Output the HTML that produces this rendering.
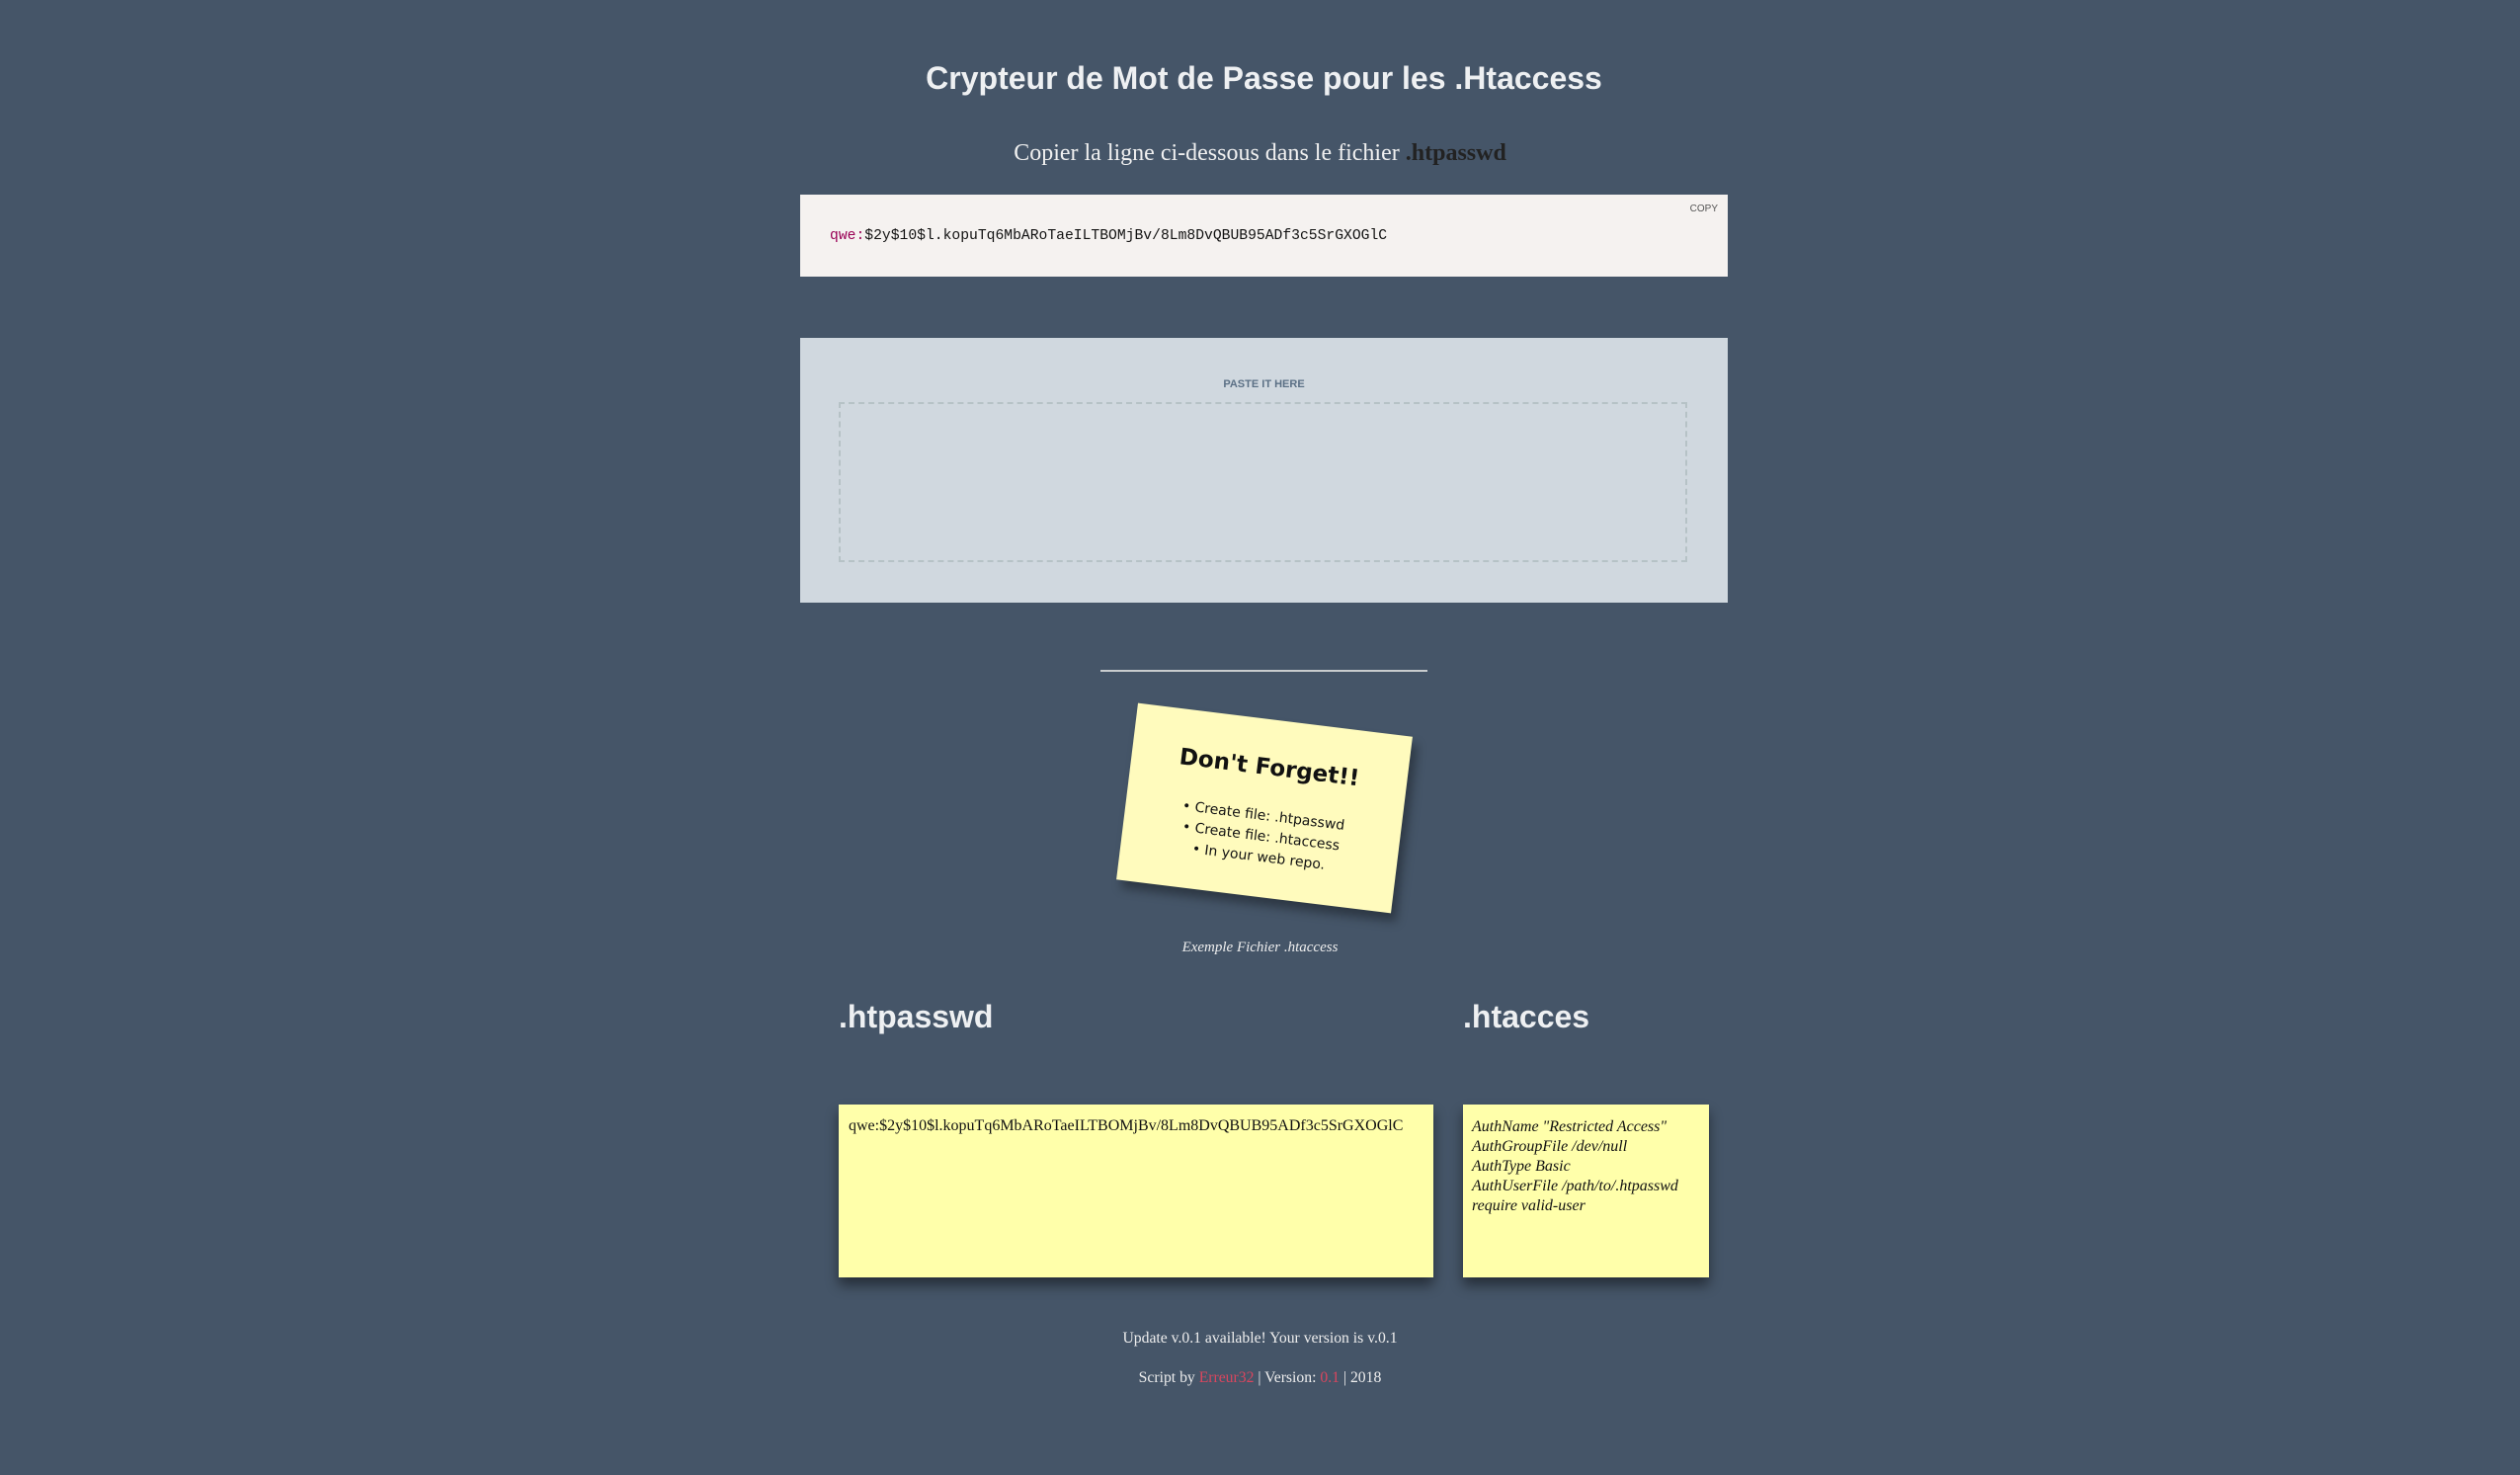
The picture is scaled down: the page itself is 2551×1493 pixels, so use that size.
<!DOCTYPE html>
<html><head><meta charset="utf-8">
<style>
html,body{margin:0;padding:0}
body{width:2551px;height:1493px;background:#455568;position:relative;overflow:hidden;font-family:"Liberation Serif",serif;color:#eee}
.a{position:absolute}
h1{position:absolute;left:0;width:2551px;top:61px;margin:0;text-align:center;font:bold 32px "Liberation Sans",sans-serif;color:#eef0f2;transform:translateX(4px)}
.sub{left:0;width:2551px;top:142px;text-align:center;font-size:24px;color:#f0f0f0}
.sub b{color:#222}
.code{left:810px;top:197px;width:939px;height:83px;background:#f5f2f0}
.code pre{position:absolute;left:30px;top:34px;margin:0;font:14.7px "Liberation Mono",monospace;color:#111}
.code pre span{color:#905}
.copy{position:absolute;right:10px;top:9px;font:10px "Liberation Sans",sans-serif;color:#555}
.paste{left:810px;top:342px;width:939px;height:268px;background:#d0d8df}
.paste .lbl{position:absolute;left:0;width:100%;top:41px;text-align:center;font:bold 11px "Liberation Sans",sans-serif;color:#5b7085}
.paste .dz{position:absolute;left:39px;top:65px;width:855px;height:158px;border:2px dashed #b6c2c6}
.hr{left:1114px;top:678px;width:331px;height:2px;background:#c9ccce}
.note{left:1140px;top:728px;width:280px;height:180px;background:#fffbbd;transform:rotate(7deg);box-shadow:6px 8px 10px rgba(0,0,0,.35);color:#111;font-family:"DejaVu Sans",sans-serif;text-align:center}
.note .t{position:absolute;top:36px;width:100%;font-weight:bold;font-size:23px}
.note .l{position:absolute;top:88px;width:100%;font-size:14px;line-height:21px}
.ex{left:0;width:2551px;top:951px;text-align:center;font-style:italic;font-size:15px;color:#eee}
.h2{top:1011px;font:bold 32px "Liberation Sans",sans-serif;color:#eef0f2}
.y{background:#ffffaa;box-shadow:0 8px 12px rgba(0,0,0,.45);color:#111}
.y1{left:849px;top:1118px;width:602px;height:175px}
.y1 div{position:absolute;left:10px;top:13px;font-size:16px}
.y2{left:1481px;top:1118px;width:249px;height:175px}
.y2 div{position:absolute;left:9px;top:13px;font-size:16px;font-style:italic;line-height:20px}
.f{left:0;width:2551px;text-align:center;font-size:15.7px;color:#eee}
.f span{color:#d9465e}
</style></head><body>
<h1>Crypteur de Mot de Passe pour les .Htaccess</h1>
<div class="a sub">Copier la ligne ci-dessous dans le fichier <b>.htpasswd</b></div>
<div class="a code"><div class="copy">COPY</div><pre><span>qwe:</span>$2y$10$l.kopuTq6MbARoTaeILTBOMjBv/8Lm8DvQBUB95ADf3c5SrGXOGlC</pre></div>
<div class="a paste"><div class="lbl">PASTE IT HERE</div><div class="dz"></div></div>
<div class="a hr"></div>
<div class="a note"><div class="t">Don't Forget!!</div><div class="l">• Create file: .htpasswd<br>• Create file: .htaccess<br>• In your web repo.</div></div>
<div class="a ex">Exemple Fichier .htaccess</div>
<div class="a h2" style="left:849px">.htpasswd</div>
<div class="a h2" style="left:1481px">.htacces</div>
<div class="a y y1"><div>qwe:$2y$10$l.kopuTq6MbARoTaeILTBOMjBv/8Lm8DvQBUB95ADf3c5SrGXOGlC</div></div>
<div class="a y y2"><div>AuthName "Restricted Access"<br>AuthGroupFile /dev/null<br>AuthType Basic<br>AuthUserFile /path/to/.htpasswd<br>require valid-user</div></div>
<div class="a f" style="top:1346px">Update v.0.1 available! Your version is v.0.1</div>
<div class="a f" style="top:1386px">Script by <span>Erreur32</span> | Version: <span>0.1</span> | 2018</div>
</body></html>
